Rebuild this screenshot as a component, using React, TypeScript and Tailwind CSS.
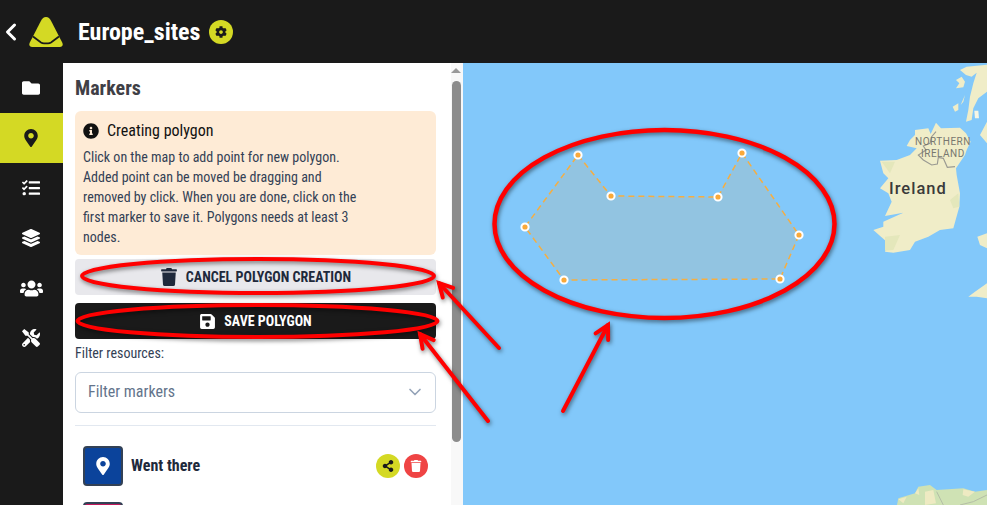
import { FaCog, FaFolder, FaInfoCircle, FaLayerGroup, FaMapMarkerAlt, FaSave, FaShareAlt, FaTasks, FaTools, FaTrash, FaUsers } from "react-icons/fa";
import { FiChevronDown, FiChevronLeft } from "react-icons/fi";
import type { ReactNode } from "react";

const pts: [number, number][] = [[578, 155], [611, 196], [718, 197], [742, 153], [799, 235], [780, 279], [564, 280], [525, 227]];

function NavItem({ active, children }: { active?: boolean; children: ReactNode }) {
  return <div className={`h-[50px] flex items-center justify-center pr-px ${active ? "bg-[#d4d924] text-[#1a1a1a]" : "text-white"}`}>{children}</div>;
}

function Arrow({ x1, y1, x2, y2 }: { x1: number; y1: number; x2: number; y2: number }) {
  const a = Math.atan2(y2 - y1, x2 - x1);
  const l = 15;
  const h = (d: number) => `${x2 + l * Math.cos(a + d)},${y2 + l * Math.sin(a + d)}`;
  return (
    <g>
      <line x1={x1} y1={y1} x2={x2} y2={y2} />
      <polyline points={`${h(2.65)} ${x2},${y2} ${h(-2.65)}`} />
    </g>
  );
}

function MapLayer() {
  return (
    <svg className="w-full h-full block" viewBox="463 63 524 442">
      <g transform="translate(860 60) scale(0.3333)">
        <path fill="#f0edc8" d="M140 258L150 240L165 225L165 210L205 205L212 222L228 188L243 205L300 203L318 220L332 245L320 270L315 285L288 325L290 345L300 400L298 440L280 505L240 510L205 530L165 545L150 570L100 578L75 575L85 550L40 510L70 500L70 485L130 458L75 468L95 425L85 400L60 385L85 355L70 340L60 302L110 300L150 285L170 265Z" />
        <path fill="#e4e7bb" d="M75 530L120 525L100 570L75 572ZM270 420L295 400L298 440L280 445ZM65 305L105 305L90 340Z" />
        <path fill="none" stroke="#9a9a92" strokeWidth="3.5" d="M228 215L215 230L210 250L190 258L198 270L175 285L190 300L215 315L232 312L235 292L250 295L262 322L285 320" />
        <path fill="#f0edc8" d="M300 30L320 20L381 14L381 95L355 115L340 145L335 180L318 185L325 150L330 110L340 70L350 38L335 50L318 45ZM288 60L305 50L315 65L310 82L288 85L298 70ZM278 140L295 130L295 150L285 155ZM302 135L315 105L310 125ZM360 225L381 185L381 250ZM352 530L381 520L381 565L360 555ZM325 710L345 695L381 670L381 715L350 710Z" />
        <path fill="#f7f6e4" d="M343 152L355 152L357 175L345 175Z" />
      </g>
      <g transform="translate(860 440) scale(0.3333)">
        <path fill="#cfe2b4" d="M110 200L115 175L165 160L175 140L210 135L230 150L310 145L345 155L381 150L381 200Z" />
        <path fill="#eeeac2" d="M195 155L220 150L228 190L195 195ZM310 148L345 155L325 170L308 165ZM165 160L175 145L178 165ZM115 178L140 170L130 190Z" />
        <path fill="none" stroke="#b4bda6" strokeWidth="3" d="M230 155L250 195M381 165L340 185L300 195" />
      </g>
      <polygon points={pts.map((p) => p.join(",")).join(" ")} fill="#ffab40" fillOpacity="0.13" stroke="#f5ae42" strokeWidth="1.5" strokeDasharray="6 4" />
      {pts.map(([x, y]) => (
        <circle key={x} cx={x} cy={y} r="3.6" fill="#f9a93a" stroke="#fff" strokeWidth="2" />
      ))}
    </svg>
  );
}

export default function App() {
  return (
    <div className="relative w-[987px] h-[505px] overflow-hidden flex flex-col bg-[#1a1a1a] [font-family:'Roboto_Condensed','Roboto',sans-serif] [font-stretch:75%]">
      <header className="h-[63px] shrink-0 flex items-center text-white">
        <FiChevronLeft size={28} strokeWidth={2.6} className="-ml-[3px] mr-[4px]" />
        <svg width="34" height="30" viewBox="0 0 34 30" className="mr-[15px] mt-[1px]">
          <path d="M17 0C14.500 0 13.300 1.300 12 3.800L.8 25.500C-.4 28 .6 30 3.200 30H30.800C33.400 30 34.400 28 33.200 25.500L22 3.800C20.700 1.300 19.500 0 17 0Z" fill="#d4d924" />
          <path d="M4 19.500L12 25.500Q13.200 26.300 15 26.300H19Q20.800 26.300 22 25.500L30 19.500" fill="none" stroke="#1a1a1a" strokeWidth="1.800" />
        </svg>
        <span className="text-[24px] font-bold leading-none">Europe_sites</span>
        <span className="ml-2 w-6 h-6 rounded-full bg-[#d4d924] text-[#1a1a1a] flex items-center justify-center">
          <FaCog size={12} />
        </span>
      </header>
      <div className="flex-1 flex min-h-0">
        <nav className="w-[63px] shrink-0">
          <NavItem><FaFolder size={18} /></NavItem>
          <NavItem active><FaMapMarkerAlt size={18} /></NavItem>
          <NavItem><FaTasks size={18} /></NavItem>
          <NavItem><FaLayerGroup size={18} /></NavItem>
          <NavItem><FaUsers size={23} /></NavItem>
          <NavItem><FaTools size={18} /></NavItem>
        </nav>
        <aside className="w-[400px] shrink-0 bg-white flex overflow-hidden">
          <div className="w-[388px] shrink-0 pl-3 pr-[15px] pt-[11px] text-[#334155]">
            <h2 className="text-[20px] font-bold leading-[28px] text-[#3f3f46]">Markers</h2>
            <div className="mt-[9px] h-[144px] rounded-md bg-[#feebd6] pl-2 pt-[9px]">
              <div className="flex items-center text-[#111] text-[16px] leading-[22px]">
                <FaInfoCircle size={16} className="mr-[8px]" />
                Creating polygon
              </div>
              <p className="mt-[5px] text-[14px] leading-[20px] w-[285px]">Click on the map to add point for new polygon. Added point can be moved be dragging and removed by click. When you are done, click on the first marker to save it. Polygons needs at least 3 nodes.</p>
            </div>
            <button className="mt-1 w-full h-9 rounded-sm bg-[#e8e8ec] flex items-center justify-center gap-2 text-[#1e293b] text-[14px] font-bold uppercase">
              <FaTrash size={18} /> Cancel polygon creation
            </button>
            <button className="mt-2 w-full h-9 rounded-sm bg-[#1a1a1a] flex items-center justify-center gap-2 text-white text-[14px] font-bold uppercase">
              <FaSave size={17} /> Save polygon
            </button>
            <div className="mt-[5px] text-[14px] leading-[18px]">Filter resources:</div>
            <div className="mt-[10px] h-[41px] rounded-md border border-[#cbd5e1] flex items-center justify-between pl-3 pr-[10px] pb-px text-[#64748b] text-[16px]">
              Filter markers
              <FiChevronDown size={20} className="text-[#94a3b8]" />
            </div>
            <div className="mt-3 border-t border-[#e2e8f0]" />
            <div className="mt-5 pl-2 pr-2 flex items-center">
              <div className="w-10 h-10 rounded border-2 border-[#334155] bg-[#0b439b] text-white flex items-center justify-center">
                <FaMapMarkerAlt size={18} />
              </div>
              <span className="ml-2 text-[#1e293b] text-[16px] font-bold">Went there</span>
              <span className="ml-auto w-6 h-6 rounded-full bg-[#d4d924] text-[#1a1a1a] flex items-center justify-center"><FaShareAlt size={12} /></span>
              <span className="ml-1 w-6 h-6 rounded-full bg-[#ef4444] text-white flex items-center justify-center"><FaTrash size={12} /></span>
            </div>
            <div className="mt-4 ml-2 w-10 h-10 rounded border-2 border-[#334155] bg-[#c2185b]" />
          </div>
          <div className="w-3 shrink-0 bg-[#f8f8f8] relative pl-px">
            <div className="mx-auto mt-[5px] w-0 h-0 border-x-[5px] border-x-transparent border-b-[5px] border-b-[#999] -translate-x-[2px]" />
            <div className="mt-[8px] w-[9px] h-[361px] rounded-[5px] bg-[#8c8c8c]" />
          </div>
        </aside>
        <main className="flex-1 bg-[#82c8fa] relative overflow-hidden">
          <MapLayer />
          <span className="absolute left-[426px] top-[114px] text-[16.5px] font-medium tracking-[1px] text-[#3a3a3a] [font-family:'Roboto',sans-serif] [font-stretch:100%]">Ireland</span>
          <span className="absolute left-[452px] top-[73px] text-[10px] leading-[11.5px] tracking-[0.5px] text-center text-[#77776f] [font-family:'Roboto',sans-serif] [font-stretch:100%]">NORTHERN<br />IRELAND</span>
        </main>
      </div>
      <svg className="absolute inset-0 pointer-events-none" width="987" height="505" fill="none" stroke="#ff0000" strokeWidth="4" strokeLinecap="round" style={{ filter: "drop-shadow(1px 2px 2px rgba(0,0,0,.5))" }}>
        <ellipse cx="664.5" cy="224" rx="170" ry="94" strokeWidth="4.500" />
        <ellipse cx="258" cy="276" rx="176" ry="17" />
        <ellipse cx="257.500" cy="321" rx="180" ry="16" />
        <Arrow x1={499} y1={348} x2={439} y2={283} />
        <Arrow x1={488} y1={421} x2={420} y2={334} />
        <Arrow x1={563} y1={411} x2={608} y2={325} />
      </svg>
    </div>
  );
}
